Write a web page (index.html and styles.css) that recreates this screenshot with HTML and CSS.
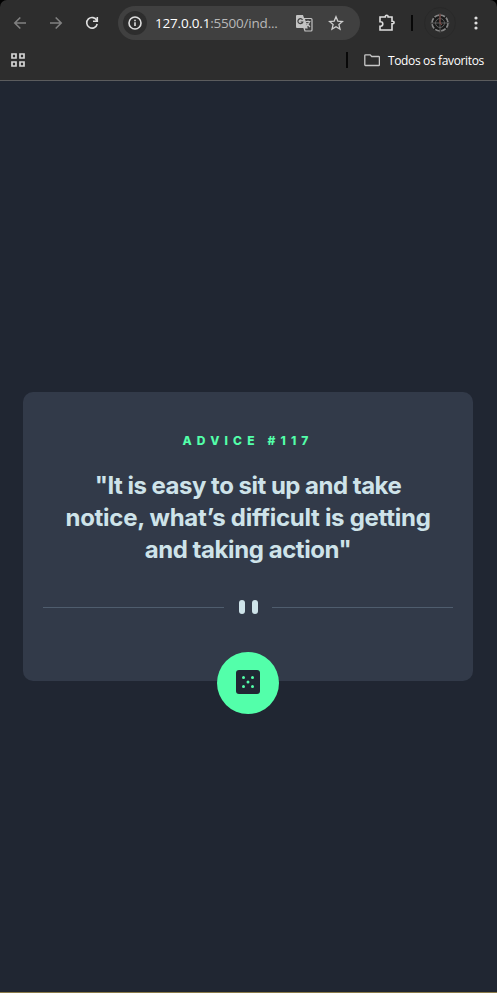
FILE: index.html
```html
<!DOCTYPE html>
<html lang="pt-BR">
<head>
<meta charset="utf-8">
<title>Advice generator</title>
<link rel="stylesheet" href="styles.css">
</head>
<body>
<div class="window">
  <header class="browser">
    <div class="toolbar">
      <svg class="icon back dim" viewBox="0 0 16 16"><path d="M14 8H3M8.3 2.5 2.8 8l5.500 5.500"/></svg>
      <svg class="icon forward dim" viewBox="0 0 16 16"><path d="M2 8h11M7.700 2.500 13.200 8l-5.500 5.500"/></svg>
      <svg class="icon reload" viewBox="0 0 16 16"><path d="M12.800 5.500A5.300 5.300 0 1 0 13.200 9M13.300 2v4.200H9"/></svg>
      <div class="address">
        <span class="info"><svg class="icon" viewBox="0 0 16 16"><circle cx="8" cy="8" r="6"/><path d="M8 7.300V11M8 4.700v1.500"/></svg></span>
        <span class="url"><b>127.0.0.1</b>:5500/ind...</span>
        <svg class="translate" viewBox="0 0 18 18"><path class="sheet" d="M2 1h6l1.200 3.500L12 14H2a1 1 0 0 1-1-1V2a1 1 0 0 1 1-1z"/><path class="page" d="M9.200 4.500H16a1 1 0 0 1 1 1V16a1 1 0 0 1-1 1H10L9 14h3z"/><path class="g" d="M7.500 5.800A2.500 2.500 0 1 0 7.800 8H5.600"/><path class="page" d="M10.500 7.500H15.500M13 6.500v1M14.500 7.500C14 10 13 11.200 11.500 12.500M11.500 9l3.500 4"/></svg>
        <svg class="icon star" viewBox="0 0 16 16"><path d="m8 1.800 1.800 4.300 4.700.4-3.600 3.100 1.100 4.500L8 11.700l-4 2.400 1.100-4.500L1.500 6.500l4.700-.4z"/></svg>
      </div>
      <svg class="puzzle" viewBox="0 0 18 18"><path d="M3 3h4.300v-.5a1.400 1.200 0 0 1 2.800 0V3H14v4.200h.8a1.300 1.300 0 0 1 0 2.600H14V16H2v-3.800h.6a2.200 2.200 0 0 0 0-4.400H2V3z"/></svg>
      <i class="bar"></i>
      <svg class="avatar" viewBox="0 0 32 32"><circle class="halo" cx="16" cy="16" r="15.500"/><circle class="disc" cx="16" cy="16" r="9"/><circle class="ring" cx="16" cy="16" r="8"/><circle class="inner" cx="16" cy="16" r="4.500"/><path class="inner" d="M6.500 16h19M16 6.500v19"/><path class="red" d="M16 7v9l2 2"/></svg>
      <svg class="more" viewBox="0 0 4 16"><circle cx="2" cy="3" r="1.600"/><circle cx="2" cy="8" r="1.600"/><circle cx="2" cy="13" r="1.600"/></svg>
    </div>
    <div class="bookmarks">
      <svg class="apps" viewBox="0 0 15 15"><path d="M1 1h4v4H1zM9 1h4v4H9zM1 9h4v4H1zM9 9h4v4H9z"/></svg>
      <i class="bar"></i>
      <svg class="folder" viewBox="0 0 16 14"><path d="M1.500 1.800h4.700l1.500 1.700h7a.7.7 0 0 1 .7.700v7.600a.7.700 0 0 1-.7.700H1.500a.7.700 0 0 1-.7-.7V2.500a.7.700 0 0 1 .7-.7z"/></svg>
      <span class="folder-name">Todos os favoritos</span>
    </div>
  </header>
  <main class="page-body">
    <section class="card">
      <h1 class="label">ADVICE #117</h1>
      <p class="quote"><span class="line one">"It is easy to sit up and take</span> <span class="line two">notice, what’s difficult is getting</span> <span class="line three">and taking action"</span></p>
      <div class="divider"><i class="rule"></i><i class="pill"></i><i class="pill"></i><i class="rule"></i></div>
      <button class="dice" aria-label="New advice"><svg viewBox="0 0 24 24"><rect width="24" height="24" rx="3"/><circle cx="7.500" cy="7.500" r="1.500"/><circle cx="16.500" cy="7.500" r="1.500"/><circle cx="12" cy="12" r="1.500"/><circle cx="7.500" cy="16.500" r="1.500"/><circle cx="16.500" cy="16.500" r="1.500"/></svg></button>
    </section>
  </main>
</div>
</body>
</html>
```
FILE: styles.css
```css
* { box-sizing: border-box; }
body { margin: 0; background: #000; }
svg { display: block; flex: none; fill: none; }
.window { height: 993px; display: flex; flex-direction: column; overflow: hidden; border-bottom: 1px solid #8b7b4a; }
.browser { height: 81px; flex: none; background: #2d2d2d; border-bottom: 1px solid #5b5c5e; border-radius: 7px 7px 0 0; font-family: "Open Sans", "Noto Sans", sans-serif; }
.toolbar { height: 46px; display: flex; align-items: center; padding-left: 12px; }
.icon { width: 16px; height: 16px; stroke: #dedede; stroke-width: 1.600; }
.dim { stroke: #818181; }
.forward { margin-left: 20px; }
.reload { margin-left: 20px; }
.address { width: 242px; height: 34px; margin-left: 18px; padding-left: 5px; display: flex; align-items: center; border-radius: 17px; background: #404040; }
.info { width: 24px; height: 24px; border-radius: 50%; background: #2d2d2d; display: grid; place-items: center; }
.url { width: 126px; margin-left: 8px; font-size: 13.500px; letter-spacing: -.2px; color: #b8b8b8; white-space: nowrap; }
.url b { font-weight: 400; color: #fff; }
.translate { width: 18px; height: 18px; margin-left: 14px; }
.sheet { fill: #c4c4c4; }
.page { stroke: #c4c4c4; stroke-width: 1.200; }
.g { stroke: #404040; stroke-width: 1.200; }
.star { margin-left: 15px; stroke: #cfcfcf; stroke-width: 1.300; }
.puzzle { width: 18px; height: 18px; margin-left: 18px; stroke: #dedede; stroke-width: 1.600; }
.bar { width: 2px; height: 16px; background: #080808; }
.toolbar .bar { margin-left: 15px; }
.avatar { width: 32px; height: 32px; margin-left: 11px; }
.halo { stroke: #292929; }
.disc { fill: #191919; }
.ring { stroke: #858585; stroke-width: 1.700; stroke-dasharray: 5 1.300; }
.inner { stroke: #606060; }
.red { stroke: #81443e; }
.more { width: 4px; height: 16px; margin-left: 18px; fill: #dedede; }
.bookmarks { height: 28px; display: flex; align-items: center; padding-left: 11px; }
.apps { width: 15px; height: 15px; stroke: #d5d5d5; stroke-width: 1.700; }
.bookmarks .bar { margin-left: 320px; }
.folder { width: 16px; height: 14px; margin-left: 16px; stroke: #c7c7c7; stroke-width: 1.300; }
.folder-name { margin-left: 8px; font-size: 12px; letter-spacing: -.36px; color: #fff; white-space: nowrap; }
.page-body { flex: 1; display: flex; justify-content: center; align-items: center; padding-right: 1px; background: #202632; }
.card { width: 450px; height: 289px; display: flex; flex-direction: column; align-items: center; border-radius: 10px; background: #323a49; padding: 41px 20px 0; font-family: Inter, sans-serif; }
.label { margin: 0; height: 16px; font-size: 12px; line-height: 16px; font-weight: 800; letter-spacing: 5.150px; color: #53ffaa; white-space: nowrap; }
.quote { margin: 21px 0 0; font-size: 24px; line-height: 32px; font-weight: 700; text-align: center; color: #cee3e9; white-space: nowrap; }
.line { display: block; }
.one { letter-spacing: -.51px; }
.two { letter-spacing: -.28px; }
.three { letter-spacing: -.43px; }
.divider { width: 100%; height: 16px; margin-top: 34px; display: flex; align-items: center; }
.rule { flex: 1; height: 1px; background: #4f5d6e; }
.pill { width: 6px; height: 14px; border-radius: 3px; background: #cee3e9; }
.rule + .pill { margin-left: 15px; }
.pill + .pill { margin-left: 7px; margin-right: 14px; }
.dice { width: 62px; height: 62px; flex: none; margin-top: 38px; padding: 0 0 2px; border: 0; border-radius: 50%; background: #53ffaa; display: grid; place-items: center; }
.dice svg { width: 24px; height: 24px; }
.dice rect { fill: #202733; }
.dice circle { fill: #53ffaa; }
```
